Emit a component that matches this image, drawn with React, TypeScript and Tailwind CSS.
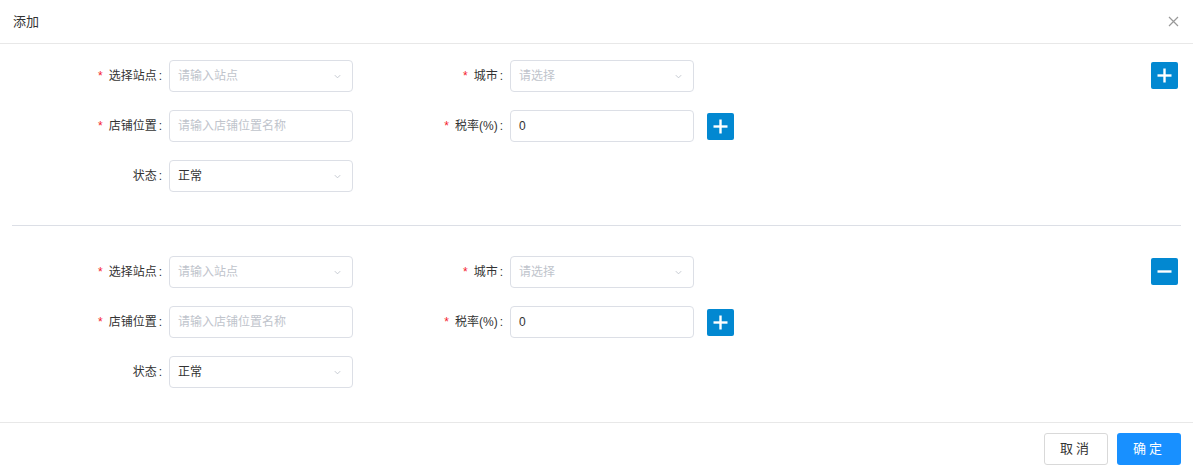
import React from "react";

const font = { fontFamily: '"Liberation Sans", "Noto Sans CJK SC", sans-serif' };

function Chevron() {
  return (
    <svg width="9" height="9" viewBox="0 0 10 10" className="text-[#c0c4cc]">
      <path d="M2 3.5 L5 6.5 L8 3.5" fill="none" stroke="currentColor" strokeWidth="1" />
    </svg>
  );
}

function Label({ text, required, width }: { text: string; required?: boolean; width: string }) {
  return (
    <div className={`${width} shrink-0 pr-[7px] text-right text-[12px] text-[#333]`}>
      {required && <span className="mr-[6px] text-[#f5222d]">*</span>}
      {text}
      <span className="ml-[2px]">:</span>
    </div>
  );
}

function Select({ placeholder, value }: { placeholder?: string; value?: string }) {
  return (
    <div className="flex h-[32px] w-[184px] items-center justify-between rounded-[4px] border border-[#dcdfe6] pl-[8px] pr-[10px] text-[12px]">
      <span className={value ? "text-[#333]" : "text-[#c0c4cc]"}>{value ?? placeholder}</span>
      <Chevron />
    </div>
  );
}

function Input({ placeholder, value }: { placeholder?: string; value?: string }) {
  return (
    <div className="flex h-[32px] w-[184px] items-center rounded-[4px] border border-[#dcdfe6] px-[8px] text-[12px]">
      <span className={value ? "text-[#333]" : "text-[#c0c4cc]"}>{value ?? placeholder}</span>
    </div>
  );
}

function IconBtn({ minus }: { minus?: boolean }) {
  return (
    <div className="flex h-[27px] w-[27px] items-center justify-center rounded-[2px] bg-[#0288d1]">
      <svg width="17" height="17" viewBox="0 0 17 17">
        <path d="M1.5 8.5 H15.5" stroke="#fff" strokeWidth="2.4" />
        {!minus && <path d="M8.5 1.5 V15.5" stroke="#fff" strokeWidth="2.4" />}
      </svg>
    </div>
  );
}

function Group({ minus }: { minus?: boolean }) {
  return (
    <div className="flex justify-between pr-[15px]">
      <div className="flex flex-col gap-[18px] pl-[63px]">
        <div className="flex items-center">
          <Label text="选择站点" required width="w-[106px]" />
          <Select placeholder="请输入站点" />
          <Label text="城市" required width="w-[157px]" />
          <Select placeholder="请选择" />
        </div>
        <div className="flex items-center">
          <Label text="店铺位置" required width="w-[106px]" />
          <Input placeholder="请输入店铺位置名称" />
          <Label text="税率(%)" required width="w-[157px]" />
          <Input value="0" />
          <div className="ml-[13px]">
            <IconBtn />
          </div>
        </div>
        <div className="flex items-center">
          <Label text="状态" width="w-[106px]" />
          <Select value="正常" />
        </div>
      </div>
      <div className="pt-[2px]">
        <IconBtn minus={minus} />
      </div>
    </div>
  );
}

export default function App() {
  return (
    <div className="flex h-[471px] w-[1193px] flex-col bg-white" style={font}>
      <header className="flex h-[44px] items-center justify-between border-b border-[#e8e8e8] pl-[13px] pr-[14px]">
        <span className="text-[13px] text-[#333]">添加</span>
        <svg width="11" height="11" viewBox="0 0 11 11">
          <path d="M1 1 L10 10 M10 1 L1 10" stroke="#999" strokeWidth="1.2" />
        </svg>
      </header>

      <main className="flex-1 pt-[16px]">
        <Group />
        <div className="mx-[12px] mb-[30px] mt-[33px] border-t border-[#dcdfe6]" />
        <Group minus />
      </main>

      <footer className="flex h-[49px] items-start justify-end gap-[9px] border-t border-[#e8e8e8] pr-[12px] pt-[10px]">
        <button className="h-[32px] w-[64px] rounded-[3px] border border-[#d9d9d9] bg-white text-[13px] tracking-[3px] text-[#333]">
          取消
        </button>
        <button className="h-[32px] w-[64px] rounded-[3px] bg-[#1890ff] text-[13px] tracking-[3px] text-white">
          确定
        </button>
      </footer>
    </div>
  );
}
